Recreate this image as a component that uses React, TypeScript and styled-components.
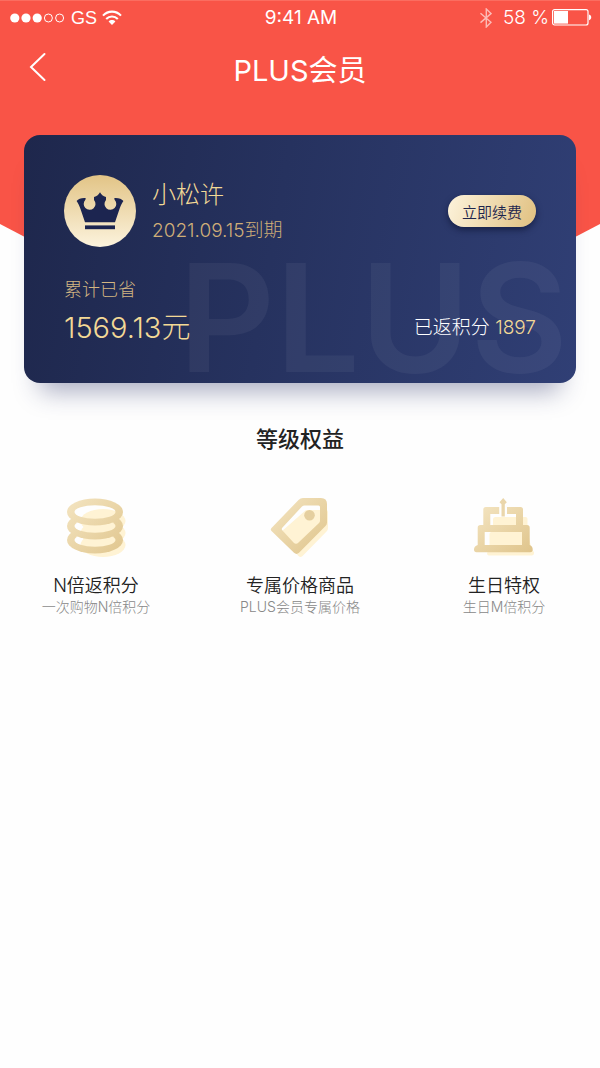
import React from 'react';
import styled, { createGlobalStyle } from 'styled-components';

const GlobalStyle = createGlobalStyle`
  * { box-sizing: border-box; }
  body {
    margin: 0;
    background: #fefefe;
    color: #222;
    font-family: Inter, "Noto Sans CJK SC", sans-serif;
    font-weight: 300;
  }
  h1, h2, h3, p { margin: 0; font-weight: inherit; }
  button { border: 0; padding: 0; font: inherit; cursor: pointer; }
`;

const Page = styled.div`
  position: relative;
  isolation: isolate;
  min-height: 100vh;

  &::before {
    content: "";
    position: absolute;
    z-index: -1;
    inset: 0 0 auto;
    height: 380px;
    background: #f95447;
    border-top: 1px solid #fb6d60;
    clip-path: polygon(0 0, 100% 0, 100% 224px, 50% 100%, 0 224px);
  }
`;

const StatusBar = styled.div`
  display: grid;
  grid-template-columns: 1fr auto 1fr;
  align-items: center;
  height: 35px;
  padding: 0 8px 0 10px;
  color: #fff;
  font-size: 19px;
  line-height: 20px;
`;

const StatusGroup = styled.div<{ $end?: boolean; $gap: number }>`
  display: flex;
  align-items: center;
  justify-content: ${(p) => (p.$end ? 'flex-end' : 'flex-start')};
  gap: ${(p) => p.$gap}px;
`;

const Carrier = styled.span`
  font-family: "Liberation Sans", sans-serif;
  font-size: 18px;
`;

const Clock = styled.span`
  font-weight: 400;
`;

const NavBar = styled.header`
  display: grid;
  grid-template-columns: 40px 1fr 40px;
  align-items: center;
  height: 72px;
  padding: 0 24px;
  color: #fff;
`;

const BackButton = styled.button`
  display: flex;
  align-items: center;
  height: 40px;
  padding: 0 0 8px 5px;
  background: none;
  color: inherit;
`;

const NavTitle = styled.h1`
  font-size: 29px;
  line-height: 40px;
  font-weight: 400;
  text-align: center;
`;

const Card = styled.section`
  position: relative;
  isolation: isolate;
  margin: 28px 24px 0;
  padding: 40px 40px 31px;
  border-radius: 16px;
  background: linear-gradient(100deg, #1e274c, #26325f 45%, #303f75);
  box-shadow: 0 24px 24px -16px rgba(38, 44, 100, 0.4);
`;

const Watermark = styled.span`
  position: absolute;
  z-index: -1;
  right: 8px;
  bottom: 10px;
  font-size: 150px;
  line-height: 110px;
  font-weight: 600;
  color: rgba(255, 255, 255, 0.05);
  pointer-events: none;
`;

const Member = styled.div`
  display: flex;
  align-items: center;
  gap: 16px;
`;

const Avatar = styled.div`
  width: 72px;
  height: 72px;
  border-radius: 50%;
  background: linear-gradient(#e2c486, #fcf3dd);
`;

const MemberText = styled.div`
  flex: 1;
`;

const Name = styled.h2`
  font-size: 24px;
  line-height: 40px;
  color: #f3d996;
`;

const Expiry = styled.p`
  font-size: 19px;
  line-height: 32px;
  color: #cfae78;
`;

const RenewButton = styled.button`
  width: 88px;
  height: 32px;
  border-radius: 16px;
  background: linear-gradient(110deg, #fdf3dc, #e0c080);
  box-shadow: 0 3px 6px rgba(10, 16, 46, 0.6);
  color: #1d254d;
  font-size: 15px;
  font-weight: 350;
`;

const Totals = styled.div`
  display: flex;
  justify-content: space-between;
  align-items: flex-end;
  margin-top: 29px;
`;

const SavedLabel = styled.p`
  font-size: 18px;
  line-height: 28px;
  color: #d3b682;
`;

const SavedAmount = styled.p`
  font-size: 29px;
  line-height: 48px;
  color: #f3d996;
`;

const Points = styled.p`
  font-size: 19px;
  line-height: 48px;
  color: #fff;
`;

const PointsValue = styled.span`
  color: #f3d996;
`;

const SectionTitle = styled.h2`
  margin-top: 40px;
  font-size: 22px;
  line-height: 32px;
  font-weight: 500;
  text-align: center;
`;

const Benefits = styled.ul`
  display: grid;
  grid-template-columns: repeat(3, 1fr);
  gap: 60px;
  margin: 43px 0 0;
  padding: 0 24px;
  list-style: none;
`;

const Benefit = styled.li`
  display: flex;
  flex-direction: column;
  align-items: center;
  white-space: nowrap;
`;

const BenefitTitle = styled.h3`
  margin-top: 16px;
  font-size: 18px;
  line-height: 24px;
  font-weight: 350;
`;

const BenefitNote = styled.p`
  font-size: 14px;
  line-height: 18px;
  color: #888;
`;

const SignalDots = () => (
  <svg width="56" height="10" viewBox="0 0 56 10" aria-hidden="true">
    {[0, 1, 2, 3, 4].map((i) => (
      <circle
        key={i}
        cx={4.8 + i * 11.2}
        cy="5"
        r={i < 3 ? 4.6 : 4}
        fill={i < 3 ? '#fff' : 'none'}
        stroke={i < 3 ? 'none' : '#fff'}
      />
    ))}
  </svg>
);

const Wifi = () => (
  <svg width="20" height="16" viewBox="0 0 20 16" fill="none" stroke="#fff" strokeWidth="2.1" aria-hidden="true">
    <path d="M1 5.6C6 .3 14 .3 19 5.6M4.2 9C7.5 5.6 12.5 5.6 15.8 9" />
    <path d="M10 15 6.6 11.5c1.9-1.9 4.9-1.9 6.8 0Z" fill="#fff" stroke="none" />
  </svg>
);

const Bluetooth = () => (
  <svg width="12" height="20" viewBox="0 0 12 20" fill="none" stroke="#fff" strokeWidth="1.4" opacity=".6" aria-hidden="true">
    <path d="M.5 5.2 11 14.2 6.3 19V1L11 5.6.5 14.6" />
  </svg>
);

const Battery = () => (
  <svg width="40" height="17" viewBox="0 0 40 17" aria-hidden="true">
    <rect x=".6" y=".6" width="35.4" height="15.4" rx="2" fill="none" stroke="#fff" strokeWidth="1.2" />
    <rect x="2" y="2" width="14" height="12.6" fill="#fff" />
    <path d="M37 5.6c3 .6 3 5 0 5.6Z" fill="#fff" />
  </svg>
);

const Crown = () => (
  <svg width="72" height="72" viewBox="0 0 72 72" fill="#1c2550" aria-hidden="true">
    <path d="M12.600 26C14.500 24 17.500 22.800 21.800 23.200L21.400 24.800A5.900 5.900 0 1 0 30 25L30 22C33 21.500 34.800 19.500 36 17.300C37.200 19.500 39 21.500 42 22L42 25A5.900 5.900 0 1 0 50.600 24.800L50.200 23.200C54.500 22.800 57.500 24 59.400 26C57.500 29 56.500 31 55.500 34L51 47.200H21L16.500 34C15.500 31 14.500 29 12.600 26Z" />
    <path d="M21 50.400h30v3.800H21Z" />
  </svg>
);

const GoldGradient = ({ id }: { id: string }) => (
  <linearGradient id={id} x1="0" y1="0" x2="1" y2="1">
    <stop offset="0" stopColor="#f4e5c2" />
    <stop offset="1" stopColor="#dfc48b" />
  </linearGradient>
);

const CoinsIcon = () => (
  <svg width="60" height="60" viewBox="0 0 60 60" aria-hidden="true">
    <defs>
      <GoldGradient id="coinGold" />
      <mask id="coinHoles" maskUnits="userSpaceOnUse" x="0" y="0" width="60" height="60">
        {[42, 28, 14].map((cy) => (
          <React.Fragment key={cy}>
            <ellipse cx="29" cy={cy} rx="28" ry="13.5" fill="#fff" />
            <ellipse cx="29" cy={cy} rx="20.5" ry="6.8" fill="#000" />
          </React.Fragment>
        ))}
      </mask>
    </defs>
    <g fill="#fff3d4">
      <ellipse cx="37" cy="23" rx="22.5" ry="12" />
      <ellipse cx="37" cy="35" rx="22.5" ry="12" />
      <ellipse cx="37" cy="47" rx="22.5" ry="12" />
    </g>
    <rect width="60" height="60" fill="url(#coinGold)" mask="url(#coinHoles)" />
  </svg>
);

const TagIcon = () => (
  <svg width="60" height="60" viewBox="0 0 60 60" aria-hidden="true">
    <defs>
      <GoldGradient id="tagGold" />
    </defs>
    <path d="M36 12h20q2 0 2 2v16q0 2-1.500 3.500L32.500 58q-2 2-4 0L11 38q-2-2 0-4Z" fill="#fff3d4" />
    <path
      fillRule="evenodd"
      fill="url(#tagGold)"
      d="M33 0h18q6 0 6 6v18.500q0 2-1.500 3.500L29 54.800q-2.500 2.200-5 0L1.500 33q-1.500-1.500 0-3L28.500 2Q30.500 0 33 0ZM34.500 7.500q-1.500 0-2.500 1L12.500 29.500q-1.500 1.500 0 3L23.500 44.500q2.500 2.500 5 0L49 25q1-1 1-2.500V9q0-1.500-1.500-1.500Z"
    />
    <circle cx="39.500" cy="17.300" r="5.300" fill="#e5cf9f" />
  </svg>
);

const CakeIcon = () => (
  <svg width="62" height="60" viewBox="0 0 62 60" aria-hidden="true">
    <defs>
      <GoldGradient id="cakeGold" />
    </defs>
    <path d="M22.500 19h30q2 0 2 2v12l4 18 2.500 3q.5 3.500-2 3.500H16q-2 0-2-2.500l2.500-4V36q0-2 2-2H20V21.500q0-2.500 2.500-2.500Z" fill="#fff3d4" />
    <path
      fillRule="evenodd"
      fill="url(#cakeGold)"
      d="M12.800 9h13.400v7h-8.900v11H43v-7.500V16h-9V9h13.500q2.500 0 2.500 2.500V27h4q2.700 0 2.700 2.700V47q3 1 3 4.500 0 2.700-2.500 2.700H3.500Q1 54.200 1 51.500 1 48 4.700 47V29.700Q4.700 27 7.400 27h2.900V11.500Q10.300 9 12.800 9ZM11.700 34v13H49V34Z"
    />
    <path d="m30.200 0 3.600 4.300-2 2V18.500h-3.300V6.300l-2-2Z" fill="#ead6ab" />
  </svg>
);

const benefits = [
  { icon: <CoinsIcon />, title: 'N倍返积分', note: '一次购物N倍积分' },
  { icon: <TagIcon />, title: '专属价格商品', note: 'PLUS会员专属价格' },
  { icon: <CakeIcon />, title: '生日特权', note: '生日M倍积分' },
];

export default function App() {
  return (
    <Page lang="zh-CN">
      <GlobalStyle />
      <StatusBar>
        <StatusGroup $gap={5}>
          <SignalDots />
          <Carrier>GS</Carrier>
          <Wifi />
        </StatusGroup>
        <Clock>9:41 AM</Clock>
        <StatusGroup $end $gap={3}>
          <StatusGroup $gap={11}>
            <Bluetooth />
            <span>58 %</span>
          </StatusGroup>
          <Battery />
        </StatusGroup>
      </StatusBar>
      <NavBar>
        <BackButton type="button" aria-label="返回">
          <svg width="18" height="30" viewBox="0 0 18 30" fill="none" stroke="#fff" strokeWidth="2" strokeLinecap="round" aria-hidden="true">
            <path d="M15.500 2 2 15l13.500 13" />
          </svg>
        </BackButton>
        <NavTitle>PLUS会员</NavTitle>
      </NavBar>
      <main>
        <Card>
          <Watermark aria-hidden="true">PLUS</Watermark>
          <Member>
            <Avatar>
              <Crown />
            </Avatar>
            <MemberText>
              <Name>小松许</Name>
              <Expiry>2021.09.15到期</Expiry>
            </MemberText>
            <RenewButton type="button">立即续费</RenewButton>
          </Member>
          <Totals>
            <div>
              <SavedLabel>累计已省</SavedLabel>
              <SavedAmount>1569.13元</SavedAmount>
            </div>
            <Points>
              已返积分 <PointsValue>1897</PointsValue>
            </Points>
          </Totals>
        </Card>
        <SectionTitle>等级权益</SectionTitle>
        <Benefits>
          {benefits.map((b) => (
            <Benefit key={b.title}>
              {b.icon}
              <BenefitTitle>{b.title}</BenefitTitle>
              <BenefitNote>{b.note}</BenefitNote>
            </Benefit>
          ))}
        </Benefits>
      </main>
    </Page>
  );
}
